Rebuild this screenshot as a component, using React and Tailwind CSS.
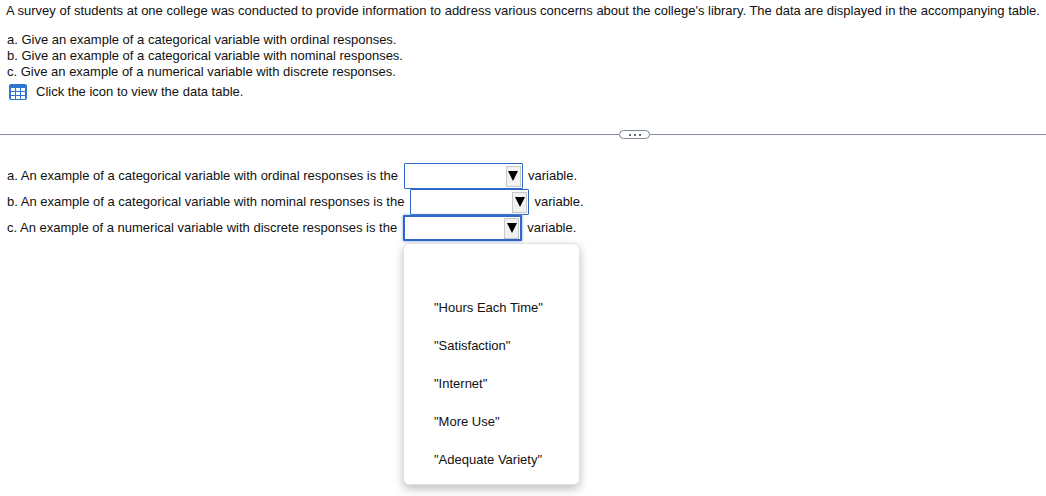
const options = ['"Hours Each Time"', '"Satisfaction"', '"Internet"', '"More Use"', '"Adequate Variety"']

const Dropdown = ({ focused }) => (
  <span
    className={`relative flex h-[26px] w-[119px] items-center justify-end rounded-[1px] bg-white pr-px ${
      focused
        ? "border-2 border-[#2f68c9] shadow-[0_0_3px_#6f9be6]"
        : "border border-[#2f68c9]"
    }`}
  >
    <span className="flex h-[21px] w-[15px] items-start justify-center border border-[#c8c8c8] bg-[#f1f1f1] pt-1">
      <span className="h-0 w-0 border-x-[5px] border-t-[10px] border-x-transparent border-t-black" />
    </span>
  </span>
)

const AnswerRow = ({ text, focused }) => (
  <div className="flex h-[26px] items-center">
    <span className="pl-[7px]">{text}</span>
    <span className="ml-[6px]">
      <Dropdown focused={focused} />
    </span>
    <span className="ml-[5px]">variable.</span>
  </div>
)

const App = () => {
  return (
    <div className="relative h-[496px] w-[1046px] overflow-hidden bg-white font-['Liberation_Sans',Arial,sans-serif] text-[13px] leading-4 text-[#111]">
      <p className="whitespace-nowrap pl-[6px] pt-[3px]">
        A survey of students at one college was conducted to provide information to address various concerns about the college's library. The data are displayed in the accompanying table.
      </p>

      <div className="mt-[13px] pl-[7px]">
        <p>a. Give an example of a categorical variable with ordinal responses.</p>
        <p>b. Give an example of a categorical variable with nominal responses.</p>
        <p>c. Give an example of a numerical variable with discrete responses.</p>
      </div>

      <div className="mt-[4px] flex items-center pl-[9px]">
        <svg width="18" height="16" viewBox="0 0 18 16">
          <rect width="18" height="16" rx="2" fill="#2f74d0" />
          <g fill="#fff">
            <rect x="2" y="4" width="4" height="3" />
            <rect x="7" y="4" width="4" height="3" />
            <rect x="12" y="4" width="4" height="3" />
            <rect x="2" y="8" width="4" height="3" />
            <rect x="7" y="8" width="4" height="3" />
            <rect x="12" y="8" width="4" height="3" />
            <rect x="2" y="12" width="4" height="3" />
            <rect x="7" y="12" width="4" height="3" />
            <rect x="12" y="12" width="4" height="3" />
          </g>
        </svg>
        <span className="ml-[9px]">Click the icon to view the data table.</span>
      </div>

      <div className="relative mt-[30px] flex h-[9px] items-center justify-center">
        <div className="h-px w-full bg-[#8a92a3]" />
        <button className="absolute left-[619px] top-0 flex h-[9px] w-[31px] items-center justify-center gap-[3px] rounded-full border border-[#7c8798] bg-white">
          <span className="h-[2px] w-[2px] bg-[#5f6b7c]" />
          <span className="h-[2px] w-[2px] bg-[#5f6b7c]" />
          <span className="h-[2px] w-[2px] bg-[#5f6b7c]" />
        </button>
      </div>

      <div className="mt-6">
        <AnswerRow text="a. An example of a categorical variable with ordinal responses is the" />
        <AnswerRow text="b. An example of a categorical variable with nominal responses is the" />
        <AnswerRow text="c. An example of a numerical variable with discrete responses is the" focused />
      </div>

      <ul className="absolute left-[403px] top-[243px] flex h-[242px] w-[177px] flex-col justify-end gap-[22px] rounded-md border border-[#e2e2e2] bg-white pb-[16px] pl-[30px] shadow-[0_4px_10px_rgba(0,0,0,0.25)]">
        {options.map((option) => (
          <li key={option}>{option}</li>
        ))}
      </ul>
    </div>
  )
}

export default App
